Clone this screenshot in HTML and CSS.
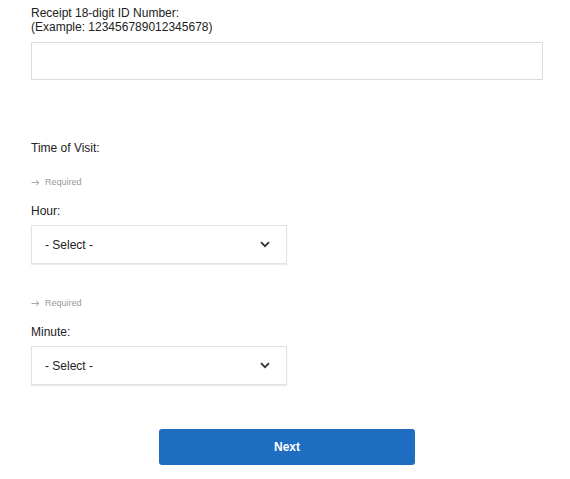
FILE: index.html
```html
<!DOCTYPE html>
<html>
<head>
<meta charset="utf-8">
<link rel="stylesheet" href="styles.css">
</head>
<body>
<form class="form">
  <div class="field">
    <label class="label">Receipt 18-digit ID Number:<br>(Example: 123456789012345678)</label>
    <input class="text-input" type="text">
  </div>

  <div class="group-title">Time of Visit:</div>

  <div class="req req-first"><svg class="arrow" width="9" height="7" viewBox="0 0 9 7"><path d="M0.5 3.5 H8 M5 0.8 L8 3.5 L5 6.2" fill="none" stroke="#a0a0a0" stroke-width="0.9"/></svg>Required</div>
  <div class="label sel-label">Hour:</div>
  <div class="select">
    <span>- Select -</span>
    <svg class="chev" width="10" height="7" viewBox="0 0 10 7"><path d="M1 1.2 L5 5.2 L9 1.2" fill="none" stroke="#333" stroke-width="1.8"/></svg>
  </div>

  <div class="req req-second"><svg class="arrow" width="9" height="7" viewBox="0 0 9 7"><path d="M0.5 3.5 H8 M5 0.8 L8 3.5 L5 6.2" fill="none" stroke="#a0a0a0" stroke-width="0.9"/></svg>Required</div>
  <div class="label sel-label">Minute:</div>
  <div class="select">
    <span>- Select -</span>
    <svg class="chev" width="10" height="7" viewBox="0 0 10 7"><path d="M1 1.2 L5 5.2 L9 1.2" fill="none" stroke="#333" stroke-width="1.8"/></svg>
  </div>

  <div class="actions">
    <button type="button" class="btn">Next</button>
  </div>
</form>
</body>
</html>
```

FILE: styles.css
```css
html, body {
  margin: 0;
  padding: 0;
  background: #fff;
}
body {
  font-family: "Liberation Sans", Arial, sans-serif;
  font-size: 12px;
  color: #222;
}
.form {
  padding: 6px 27px 0 31px;
  width: 512px;
}
.label {
  display: block;
  line-height: 14px;
  color: #222;
}
.text-input {
  display: block;
  box-sizing: border-box;
  margin-top: 8px;
  width: 512px;
  height: 38px;
  border: 1px solid #dcdcdc;
  background: #fff;
  outline: none;
}
.group-title {
  margin-top: 61px;
  line-height: 14px;
}
.req {
  display: flex;
  align-items: center;
  gap: 5px;
  font-size: 9px;
  line-height: 12px;
  color: #9a9a9a;
}
.req .arrow {
  display: block;
}
.req-first {
  margin-top: 21px;
}
.req-second {
  margin-top: 33px;
}
.sel-label {
  margin-top: 16px;
}
.select {
  box-sizing: border-box;
  margin-top: 7px;
  width: 256px;
  height: 39px;
  border: 1px solid #e2e2e2;
  box-shadow: 0 1px 1px rgba(0,0,0,0.08);
  display: flex;
  align-items: center;
  justify-content: space-between;
  padding: 0 16px 0 13px;
  color: #222;
  font-size: 12px;
}
.chev {
  display: block;
}
.actions {
  display: flex;
  justify-content: center;
  margin-top: 44px;
}
.btn {
  width: 256px;
  height: 36px;
  border: none;
  border-radius: 3px;
  background: #1e6dc1;
  color: #fff;
  font-family: "Liberation Sans", Arial, sans-serif;
  font-weight: bold;
  font-size: 12px;
}
```
